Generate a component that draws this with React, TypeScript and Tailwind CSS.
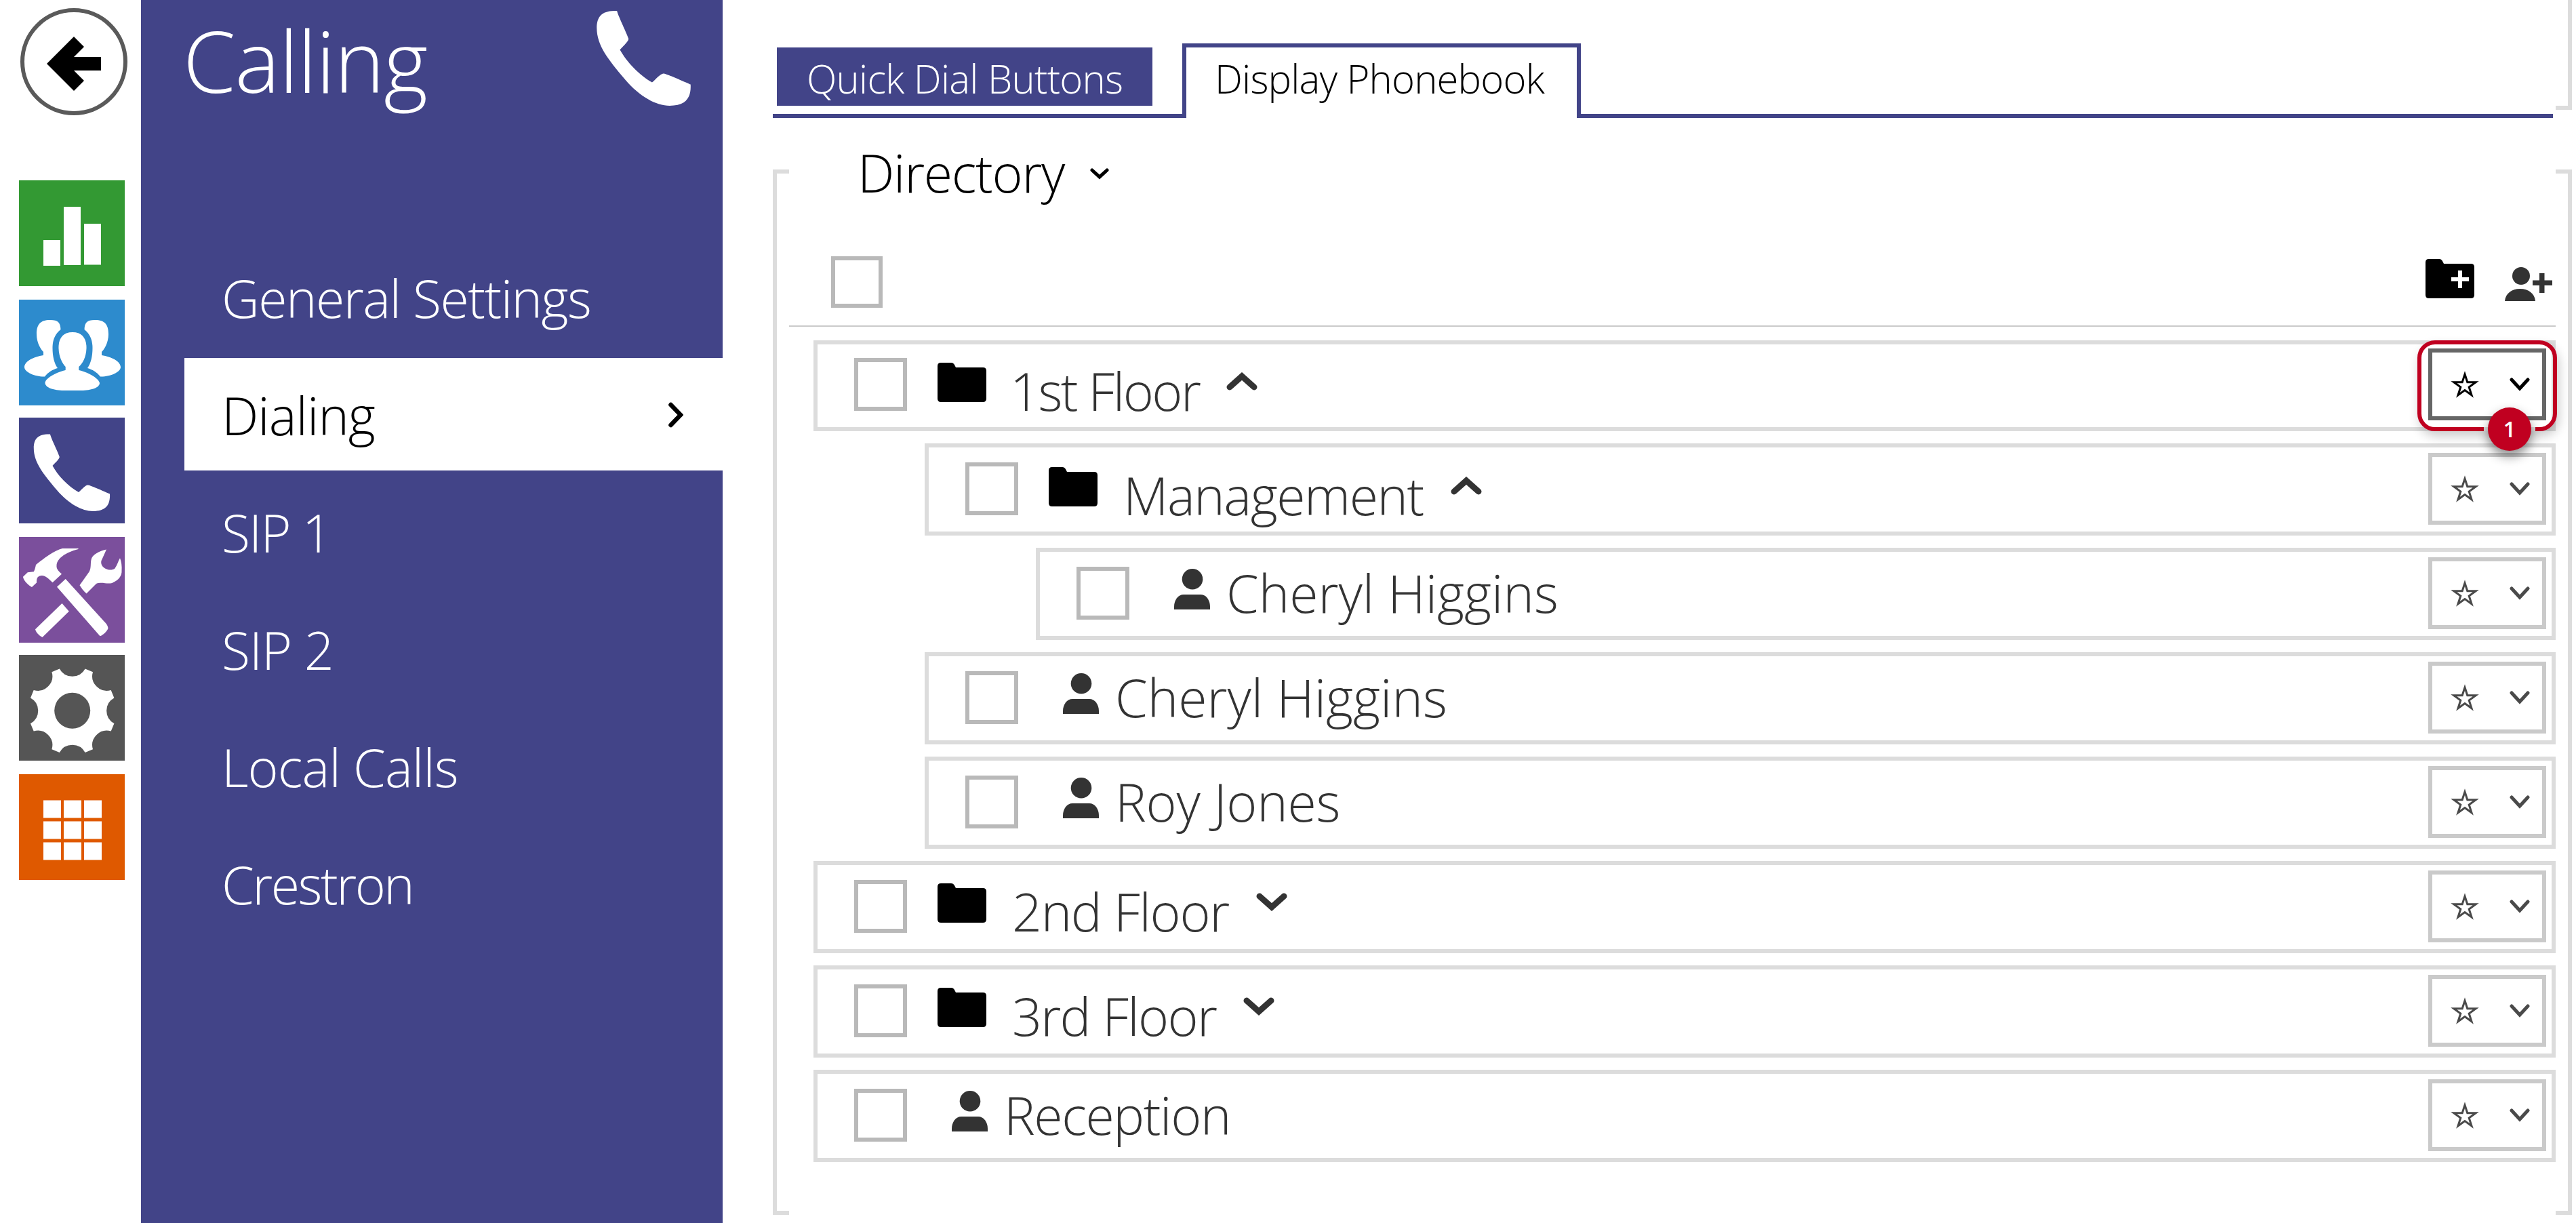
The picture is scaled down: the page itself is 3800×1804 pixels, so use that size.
import { ReactNode } from "react";
import clsx from "clsx";

const PHONE_PATH =
  "M46 24.5C47 30 59 54 59.8 58C60 61 51 69 49.5 71C57 85 73 102 88 110C91 108 98 99 102 99.5C106 100 128 110 134 112.5C135 130 127 138 109 138C93 138 73 127 56 107C35 82 22 66 21.8 45C22 31 28 24 46 24.5Z";

const SIDE_USER_PATH =
  "M46 30C58 30 61 34 61.5 44C53 51 49.5 60 49.5 71C49.5 84 52 94 57 101C50 103 43 107 38 113.5C24 114 8 107 8 99.5C8 91 22 84 36 82V77C30 71 26 61 26 51C26 37 31 30 46 30Z";

const menu = [
  { label: "General Settings", tracking: "tracking-[-1.5px]" },
  { label: "Dialing", tracking: "tracking-[-1px]", active: true },
  { label: "SIP 1", tracking: "tracking-[-1.9px]" },
  { label: "SIP 2", tracking: "tracking-[-1.2px]" },
  { label: "Local Calls", tracking: "tracking-[-0.9px]" },
  { label: "Crestron", tracking: "tracking-[-2.5px]" },
];

type Entry = {
  name: string;
  kind: "folder" | "person";
  level: number;
  open?: boolean;
  tracking?: string;
};

const entries: Entry[] = [
  { name: "1st Floor", kind: "folder", level: 0, open: true, tracking: "tracking-[-2.5px] -ml-[3px]" },
  { name: "Management", kind: "folder", level: 1, open: true, tracking: "tracking-[-1.45px]" },
  { name: "Cheryl Higgins", kind: "person", level: 2 },
  { name: "Cheryl Higgins", kind: "person", level: 1 },
  { name: "Roy Jones", kind: "person", level: 1, tracking: "tracking-[-0.2px]" },
  { name: "2nd Floor", kind: "folder", level: 0, tracking: "tracking-[-1.3px]" },
  { name: "3rd Floor", kind: "folder", level: 0, tracking: "tracking-[-1.65px]" },
  { name: "Reception", kind: "person", level: 0, tracking: "tracking-[-1.4px]" },
];

const indents = ["ml-9", "ml-[200px]", "ml-[364px]"];

// eight teeth, with a round notch between each pair
function gearPath(cx: number, cy: number, r: number) {
  const pt = (deg: number) => {
    const a = (deg * Math.PI) / 180;
    return `${(cx + r * Math.cos(a)).toFixed(1)} ${(cy + r * Math.sin(a)).toFixed(1)}`;
  };
  let d = "";
  for (let i = 0; i < 8; i++) {
    const mid = i * 45;
    d += `${i === 0 ? "M" : "L"}${pt(mid - 17)}A21.5 21.5 0 0 0 ${pt(mid + 17)}`;
  }
  return d + "Z";
}

function Tile({ className, children }: { className: string; children: ReactNode }) {
  return (
    <button className={clsx("block size-[156px]", className)}>
      <svg viewBox="0 0 156 156" className="size-full" fill="#fff">
        {children}
      </svg>
    </button>
  );
}

function Rail() {
  return (
    <nav className="flex w-[208px] shrink-0 flex-col pt-3 pl-7">
      <button className="ml-0.5 size-[158px]">
        <svg viewBox="0 0 158 158" className="size-full">
          <circle cx="79" cy="79" r="76" fill="#fff" stroke="#5a5a5a" strokeWidth="6" />
          <path d="M39 82L79 42L94 57L79 72H119V92H79L94 107L79 122Z" />
        </svg>
      </button>
      <Tile className="mt-24 bg-[#339933]">
        <path d="M36 88H61V126H36ZM66 39H91V125H66ZM96 64H121V124.5H96Z" />
      </Tile>
      <Tile className="mt-5 bg-[#2d8bcd]">
        <path d={SIDE_USER_PATH} />
        <path transform="matrix(-1 0 0 1 158 0)" d={SIDE_USER_PATH} />
        <path d="M79 48C65 48 58 57 58.5 72C59 85 64 94 68.7 99V104C52 108 38.5 117 38.5 123C39 130 52 134 66 134H92C106 134 119 130 119 123C118 117 105 108 88.3 104V99C94 94 99 85 99.5 72C100 57 93 48 79 48Z" />
      </Tile>
      <Tile className="mt-[18px] bg-[#424488]">
        <path d={PHONE_PATH} />
      </Tile>
      <Tile className="mt-5 bg-[#7b4f9c]">
        <path d="M87.5 17H64C52 20 36 32 25 41C24 46 23 49 21.8 51.3L12.8 52.3L6 58.7C6 63 13 71 19 74L26 67.5C26 64 26 61 28 59C32 56 37 56 43.4 61.5L49.5 67.3L63 54.7C58 50 55 47 55.5 42C56 32 68 23 87.5 18Z" />
        <path d="M68.7 62L56 73.7L119.5 146.3C124 145 130 139 131.5 134.7C131 130 128 127 125 124Z" />
        <path d="M129 18.5C118 21 109 26 107 32C105 38 107 46 103.5 51.5L89.5 71.3C92 75 95 80 99.5 83.5L114 69C122 66 130 70 137.3 68C147 64 152 57 151.5 50C152 43 151 36 149 31.3C146 36 145 42 141.4 46.5C138 49.5 131 49 127 46.5C121 43 120 37 122.5 33Z" />
        <path d="M63.5 98L73.8 109.7L34.5 148C30 146 25 141 24 136.3Z" />
      </Tile>
      <Tile className="mt-[18px] bg-[#555555]">
        <path d={gearPath(78.7, 82.3, 64.5)} />
        <circle cx="78.7" cy="82.3" r="26.5" fill="#555555" />
      </Tile>
      <Tile className="mt-5 bg-[#df5900]">
        {[38.5, 69.5, 100.5].map((y) =>
          [36, 66, 96].map((x) => <rect key={x + "-" + y} x={x} y={y} width="26" height="26" />)
        )}
      </Tile>
    </nav>
  );
}

function Sidebar() {
  return (
    <aside className="w-[858px] shrink-0 bg-[#424488] text-white">
      <header className="flex h-[355px] items-start justify-between pr-[46px] pl-[62px]">
        <h1 className="mt-[26px] text-[125px] leading-none font-light tracking-[-1px]">Calling</h1>
        <svg viewBox="21.8 24.5 113 113.5" className="mt-4 size-[140px]" fill="#fff">
          <path d={PHONE_PATH} />
        </svg>
      </header>
      <ul className="ml-16 flex flex-col gap-[7px]">
        {menu.map((item) => (
          <li
            key={item.label}
            className={clsx(
              "flex h-[166px] items-center justify-between pr-[58px] pl-[55px] text-[77px] font-light",
              item.active && "bg-white text-black"
            )}
          >
            <span className={clsx("pt-0.5 leading-none", item.tracking)}>{item.label}</span>
            {item.active && (
              <svg viewBox="0 0 22 38" className="mt-0.5 h-[38px] w-[22px]" fill="none" stroke="#000" strokeWidth="6.5" strokeLinecap="round">
                <path d="M3.5 4L18 19L3.5 34" />
              </svg>
            )}
          </li>
        ))}
      </ul>
    </aside>
  );
}

function Tabs() {
  return (
    <div className="flex h-[174px] w-[2626px] items-stretch pt-16 text-[58px] leading-[91px] font-light">
      <div className="w-[604px] border-b-6 border-[#424488] pt-1.5 pl-1.5">
        <div className="h-[86px] w-[554px] bg-[#424488] pl-11 tracking-[-0.76px] text-white">Quick Dial Buttons</div>
      </div>
      <div className="w-[588px] border-x-6 border-t-6 border-[#424488] pl-[42px] tracking-[-0.83px] text-black">
        Display Phonebook
      </div>
      <div className="flex-1 border-b-6 border-[#424488]" />
    </div>
  );
}

function Checkbox({ className }: { className?: string }) {
  return <span className={clsx("shrink-0 border-6 border-[#b9b9b9] bg-white", className)} />;
}

function FolderIcon({ plus, className }: { plus?: boolean; className?: string }) {
  return (
    <svg viewBox="0 0 72 58" className={clsx("h-[58px] w-[72px] shrink-0", className)}>
      <path d="M5 0H20C24 0 25 3 27 7H67Q72 7 72 12V53Q72 58 67 58H5Q0 58 0 53V5Q0 0 5 0Z" />
      {plus && <path d="M51 17V43M38 30H64" stroke="#fff" strokeWidth="6" />}
    </svg>
  );
}

function PersonIcon({ className }: { className?: string }) {
  return (
    <svg viewBox="0 0 53 60" className={clsx("h-[60px] w-[53px] shrink-0", className)} fill="#333">
      <circle cx="27" cy="15.3" r="15.3" />
      <path d="M0 60V56C0 46 6 38 14 38H39C47 38 53 46 53 56V60Z" />
    </svg>
  );
}

function StarButton({ focused }: { focused?: boolean }) {
  return (
    <div className="relative mb-2.5 h-[106px] w-[174px] shrink-0">
      <button
        className={clsx(
          "flex size-full items-center gap-[45px] border-6 bg-white pl-[27px]",
          focused ? "border-[#666666] text-black" : "border-[#cacaca] text-[#4a4a4a]"
        )}
      >
        <svg viewBox="0 0 42 40" className="h-10 w-[42px]" fill="none" stroke="currentColor" strokeWidth="3" strokeMiterlimit="10">
          <path d="M21 5L24.8 16.7H37.2L27.2 24L31 35.8L21 28.5L11 35.8L14.8 24L4.8 16.7H17.2Z" />
        </svg>
        <svg viewBox="0 0 30 20" className="h-5 w-[30px]" fill="none" stroke="currentColor" strokeWidth="5" strokeLinecap="round">
          <path d="M3 3L15 16L27 3" />
        </svg>
      </button>
      {focused && (
        <>
          <div className="absolute -top-3 -left-4 h-[134px] w-[206px] rounded-[26px] border-6 border-[#c00020] shadow-[3px_8px_16px_rgba(0,0,0,0.2)]" />
          <div className="absolute top-[116px] left-[82px] h-1.5 w-[76px] bg-[#dcdcdc]" />
          <div className="absolute top-[87px] left-[88px] z-10 size-16 rounded-full bg-[#c00020] text-center text-[32px] leading-[64px] font-semibold text-white shadow-[0_8px_16px_rgba(0,0,0,0.45)]">
            1
          </div>
        </>
      )}
    </div>
  );
}

function Row({ entry, first }: { entry: Entry; first: boolean }) {
  const folder = entry.kind === "folder";
  return (
    <li
      className={clsx(
        "flex items-end border-6 border-[#dcdcdc] pr-2 pl-[54px] text-[#333]",
        first ? "h-[134px]" : "h-[136px]",
        indents[entry.level]
      )}
    >
      <Checkbox className="mb-6 size-[78px]" />
      {folder ? (
        <FolderIcon className={clsx("mr-[38px] ml-[45px]", entry.open ? "mb-[37px]" : "mb-[39px]")} />
      ) : (
        <PersonIcon className="mr-6 mb-[39px] ml-[66px]" />
      )}
      <span
        className={clsx(
          "text-[77px] leading-none font-light whitespace-nowrap",
          !folder ? "mb-[25px]" : entry.open ? "mb-[15px]" : "mb-[17px]",
          entry.tracking
        )}
      >
        {entry.name}
      </span>
      {folder && (
        <svg
          viewBox="0 0 46 27"
          className={clsx("ml-10 h-[27px] w-[46px]", entry.open ? "mb-[54px]" : "mb-[56px]")}
          fill="none"
          stroke="#333"
          strokeWidth="9"
          strokeLinecap="round"
        >
          <path d={entry.open ? "M5 22L23 6L41 22" : "M5 5L23 21L41 5"} />
        </svg>
      )}
      <div className="flex-1" />
      <StarButton focused={first} />
    </li>
  );
}

function Directory() {
  return (
    <section className="mt-[76px] flex h-[1542px]">
      <div className="w-6 border-y-6 border-l-6 border-[#dcdcdc]" />
      <div className="-mt-[34px] w-[2606px]">
        <h2 className="flex h-[77px] items-end pl-[101px] text-[77px] leading-none font-light tracking-[-1.3px] text-black">
          Directory
          <svg viewBox="0 0 28 17" className="mb-7 ml-[38px] h-[17px] w-7" fill="none" stroke="#000" strokeWidth="5" strokeLinecap="round">
            <path d="M3 3L14 13L25 3" />
          </svg>
        </h2>
        <div className="flex h-[189px] items-end border-b-2 border-[#cacaca] pr-[5px] pb-[26px] pl-[62px]">
          <Checkbox className="size-[76px]" />
          <div className="flex-1" />
          <FolderIcon plus className="mr-[45px] mb-3.5" />
          <svg viewBox="0 0 70 50" className="mb-2.5 h-[50px] w-[70px]" fill="#333">
            <circle cx="24" cy="13" r="13" />
            <path d="M0 50C1 39 10 32 22.5 32S44 39 45 50Z" />
            <path d="M41 19.5H51V9H58.5V19.5H70V27H58.5V38H51V27H41Z" />
          </svg>
        </div>
        <ul className="mt-5 flex flex-col gap-[18px]">
          {entries.map((entry, i) => (
            <Row key={i} entry={entry} first={i === 0} />
          ))}
        </ul>
      </div>
      <div className="w-6 border-y-6 border-r-6 border-[#dcdcdc]" />
    </section>
  );
}

export default function App() {
  return (
    <div className="flex h-[1804px] w-[3800px] overflow-hidden bg-white font-['Open_Sans',sans-serif]">
      <Rail />
      <Sidebar />
      <main className="flex-1 pl-[74px]">
        <div className="flex">
          <Tabs />
          <div className="ml-1 h-[162px] w-6 border-r-6 border-b-6 border-[#dcdcdc]" />
        </div>
        <Directory />
      </main>
    </div>
  );
}
